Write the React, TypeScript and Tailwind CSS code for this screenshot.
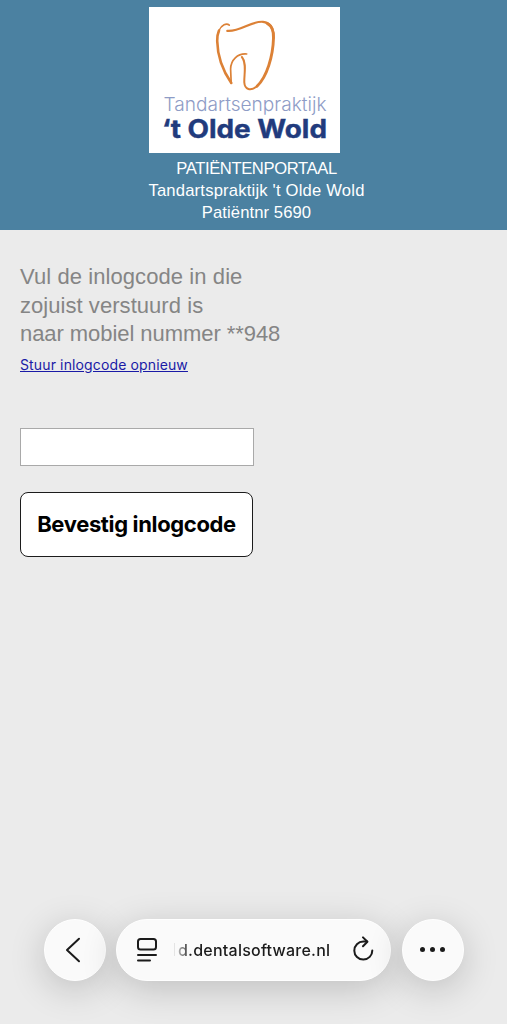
import React, { useState } from 'react';

function PracticeLogo() {
  return (
    <svg width="191" height="146" viewBox="0 0 191 146" className="bg-white" role="img">
      {/* Tooth outline */}
      <g fill="none" stroke="#dc8136" strokeLinecap="round" strokeLinejoin="round">
        <path d="M80.3 18.2 C77.5 15.6 72.5 18 70 23.5 C68.5 27 68 30 68.2 34" strokeWidth="1.6" />
        <path d="M70 23.5 C68.5 27 68 30 68.2 34 C68.5 48 74 64 82.3 76" strokeWidth="2.6" />
        <path d="M78.3 23.8 C91 25 102 13.8 114 14.8 C121.5 15.6 124.8 21.5 124.5 31" strokeWidth="2.2" />
        <path d="M118 16.2 C122.8 18.8 124.8 24 124.5 31 C124 49 118 70 108 79.2" strokeWidth="2.9" />
        <path d="M108 79.2 C101.5 84.5 95.8 82.5 95.3 75.5 C95 67 98 56 92.9 50" strokeWidth="2" />
        <path d="M97.7 47 C88.5 46.2 81.8 53 81.6 62 L82.2 76" strokeWidth="1.7" />
      </g>
      <text
        x="14.5"
        y="103.5"
        textLength="163"
        lengthAdjust="spacingAndGlyphs"
        className="fill-[#8e9cc6] text-[18.5px] font-light"
      >
        Tandartsenpraktijk
      </text>
      <text
        x="13"
        y="131"
        textLength="165"
        lengthAdjust="spacingAndGlyphs"
        className="fill-[#213b7d] text-[25px] font-bold"
        stroke="#213b7d"
        strokeWidth="0.4"
      >
        ‘t Olde Wold
      </text>
    </svg>
  );
}

function BrowserBar() {
  const glass = 'bg-[#fafafa] border border-white shadow-[0_8px_36px_rgba(0,0,0,0.19)]';

  return (
    <nav className="mt-auto flex gap-[10.5px] pb-[43.5px] pl-[43.5px] text-[#1b1b1b]">
      <button type="button" className={`flex h-[62px] w-[62px] items-center justify-center rounded-full ${glass}`}>
        <svg className="mr-[4px]" width="28" height="28" viewBox="0 0 28 28" fill="none" stroke="currentColor" strokeWidth="2" strokeLinecap="round" strokeLinejoin="round">
          <path d="M20 2.8 L8 14 L20 25.2" />
        </svg>
      </button>

      <div className={`flex h-[62px] w-[275px] items-center rounded-full pl-[19px] ${glass}`}>
        <svg className="shrink-0" width="24" height="26" viewBox="0 0 24 26" fill="none" stroke="currentColor" strokeWidth="2" strokeLinecap="round">
          <rect x="2" y="2" width="18" height="10.5" rx="2.5" />
          <path d="M2 18 H20 M2 23.5 H14" />
        </svg>
        <div className="ml-[14px] flex items-center whitespace-nowrap text-[16px] font-medium tracking-[0.23px]">
          {/* Sliver of the letter that is scrolled out of the address field */}
          <span className="mr-[2px] h-[13px] w-px bg-[#e4e4e4]" />
          <span className="bg-linear-to-r from-[#c8c8c8] to-[#1b1b1b] to-[14px] bg-clip-text pl-px text-transparent">
            d.dentalsoftware.nl
          </span>
        </div>
        <svg className="ml-[20px] shrink-0" width="26" height="28" viewBox="0 0 26 28" fill="none" stroke="currentColor" strokeWidth="2" strokeLinecap="round" strokeLinejoin="round">
          <path d="M22.3 14.5 A9 9 0 1 1 13.3 5.6 H17" />
          <path d="M13 1.4 L17.4 5.8 L13 10.2" />
        </svg>
      </div>

      <button type="button" className={`flex h-[62px] w-[62px] items-center justify-center gap-[5px] rounded-full ${glass}`}>
        <span className="h-[5px] w-[5px] rounded-full bg-current" />
        <span className="h-[5px] w-[5px] rounded-full bg-current" />
        <span className="h-[5px] w-[5px] rounded-full bg-current" />
      </button>
    </nav>
  );
}

export default function App() {
  const [code, setCode] = useState('');

  return (
    <div className="flex h-screen flex-col overflow-hidden bg-[#ebebeb] font-['Inter',sans-serif]">
      <header className="flex h-[230px] flex-col items-center bg-[#4b81a1] pt-[6.5px] text-white">
        <div className="mr-[18px]">
          <PracticeLogo />
        </div>
        <div className="mt-[5.5px] pl-[6px] text-center font-['Liberation_Sans',sans-serif] text-[16.6px] leading-[22px]">
          <p className="tracking-[-0.38px]">PATIËNTENPORTAAL</p>
          <p className="tracking-[0.2px]">Tandartspraktijk 't Olde Wold</p>
          <p className="tracking-[0.1px]">Patiëntnr 5690</p>
        </div>
      </header>

      <main className="px-5 pt-[33px]">
        <p className="font-['Liberation_Sans',sans-serif] text-[22px] leading-[28.5px] text-[#858585]">
          <span className="tracking-[0.08px]">Vul de inlogcode in die</span>
          <br />
          <span className="tracking-[0.05px]">zojuist verstuurd is</span>
          <br />
          <span className="tracking-[-0.06px]">naar mobiel nummer **948</span>
        </p>
        <a href="#" className="mt-[6px] block w-fit text-[14px] leading-[20px] tracking-[0.13px] text-[#1a1aa6] underline">
          Stuur inlogcode opnieuw
        </a>

        <form onSubmit={(e) => e.preventDefault()}>
          <input
            type="text"
            value={code}
            onChange={(e) => setCode(e.target.value)}
            className="mt-[53px] block h-[38px] w-[234px] border border-[#a9a9a9] bg-white px-2 outline-none"
          />
          <button
            type="submit"
            className="mt-[26px] block h-[65px] w-[233px] whitespace-nowrap rounded-[8px] border-[1.5px] border-[#1c1c1c] bg-white text-[22px] font-bold tracking-[-0.35px] text-black"
          >
            Bevestig inlogcode
          </button>
        </form>
      </main>

      <BrowserBar />
    </div>
  );
}
